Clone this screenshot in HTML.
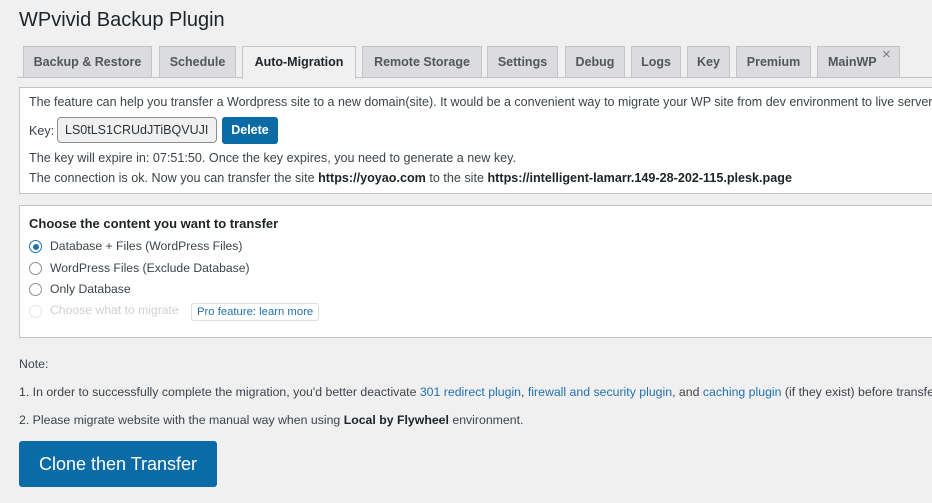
<!DOCTYPE html>
<html><head><style>
body{margin:0;width:932px;height:503px;overflow:hidden;background:#f0f0f1;font-family:"Liberation Sans",sans-serif;color:#3c434a;font-size:12.6px;position:relative}
.a{position:absolute;white-space:nowrap}
h1{position:absolute;left:19px;top:9px;margin:0;font-size:20px;font-weight:400;color:#1d2327}
.line{position:absolute;left:17px;right:0;top:77px;height:1px;background:#c3c4c7}
.tab{position:absolute;top:46px;border:1px solid #c3c4c7;background:#dcdcde;font-weight:bold;font-size:12.5px;color:#50575e;line-height:30px;text-align:center;box-sizing:border-box;height:32px}
.tab.on{background:#f0f0f1;color:#1d2327;height:33px;border-bottom:none}
.box{position:absolute;left:19px;right:-2px;background:#fff;border:1px solid #c3c4c7}
b{color:#1d2327}
.r{position:absolute;left:29px;width:13px;height:13px;border:1px solid #8c8f94;border-radius:50%;box-sizing:border-box}
.l{font-size:12.2px}
a{color:#2271b1;text-decoration:none}
.n{font-size:12.3px}
</style></head><body>
<h1>WPvivid Backup Plugin</h1>
<div class="line"></div>
<div class="tab" style="left:23px;width:129px">Backup &amp; Restore</div>
<div class="tab" style="left:159px;width:77px">Schedule</div>
<div class="tab on" style="left:242px;width:114px">Auto-Migration</div>
<div class="tab" style="left:362px;width:120px">Remote Storage</div>
<div class="tab" style="left:487px;width:71px">Settings</div>
<div class="tab" style="left:565px;width:60px">Debug</div>
<div class="tab" style="left:631px;width:50px">Logs</div>
<div class="tab" style="left:687px;width:43px">Key</div>
<div class="tab" style="left:736px;width:75px">Premium</div>
<div class="tab" style="left:817px;width:83px;text-align:left;padding-left:10px">MainWP <span style="position:absolute;left:64px;top:-7px;font-weight:400;font-size:15px;color:#787c82">×</span></div>

<div class="box" style="top:87px;height:105px"></div>
<div class="a" style="left:29px;top:95px;font-size:12.5px">The feature can help you transfer a Wordpress site to a new domain(site). It would be a convenient way to migrate your WP site from dev environment to live server</div>
<div class="a" style="left:29px;top:124px">Key:</div>
<div class="a" style="left:57px;top:117px;width:160px;height:26px;border:1px solid #8c8f94;border-radius:4px;background:#f0f0f1;box-sizing:border-box;padding:5px 7px;font-size:12.5px;color:#2c3338;overflow:hidden">LS0tLS1CRUdJTiBQVUJI</div>
<div class="a" style="left:222px;top:117px;width:56px;height:27px;background:#0a6ba6;border-radius:3px;color:#fff;font-weight:bold;font-size:12.5px;text-align:center;line-height:27px">Delete</div>
<div class="a" style="left:29px;top:151px">The key will expire in: 07:51:50. Once the key expires, you need to generate a new key.</div>
<div class="a" style="left:29px;top:171px">The connection is ok. Now you can transfer the site <b>https://yoyao.com</b> to the site <b>https://intelligent-lamarr.149-28-202-115.plesk.page</b></div>

<div class="box" style="top:205px;height:131px"></div>
<div class="a" style="left:29px;top:216px;font-weight:bold;font-size:13px;color:#1d2327">Choose the content you want to transfer</div>
<div class="r" style="top:240px;border-color:#2271b1"><div style="position:absolute;left:2.5px;top:2.5px;width:6px;height:6px;border-radius:50%;background:#2271b1"></div></div>
<div class="a l" style="left:50px;top:239px">Database + Files (WordPress Files)</div>
<div class="r" style="top:262px"></div>
<div class="a l" style="left:50px;top:261px">WordPress Files (Exclude Database)</div>
<div class="r" style="top:283px"></div>
<div class="a l" style="left:50px;top:282px">Only Database</div>
<div class="r" style="top:305px;border-color:#e5e5e5"></div>
<div class="a l" style="left:50px;top:303px;color:#d0d0d0">Choose what to migrate</div>
<div class="a" style="left:191px;top:303px;border:1px solid #e0e0e0;border-radius:3px;padding:2px 5px;font-size:11.3px;color:#2271b1">Pro feature: learn more</div>

<div class="a n" style="left:19px;top:357px">Note:</div>
<div class="a n" style="left:19px;top:385px">1. In order to successfully complete the migration, you'd better deactivate <a>301 redirect plugin</a>, <a>firewall and security plugin</a>, and <a>caching plugin</a> (if they exist) before transferring.</div>
<div class="a n" style="left:19px;top:413px">2. Please migrate website with the manual way when using <b>Local by Flywheel</b> environment.</div>
<div class="a" style="left:19px;top:441px;width:198px;height:46px;background:#0a6ba6;border-radius:3px;color:#fff;font-size:18px;text-align:center;line-height:46px">Clone then Transfer</div>
</body></html>
